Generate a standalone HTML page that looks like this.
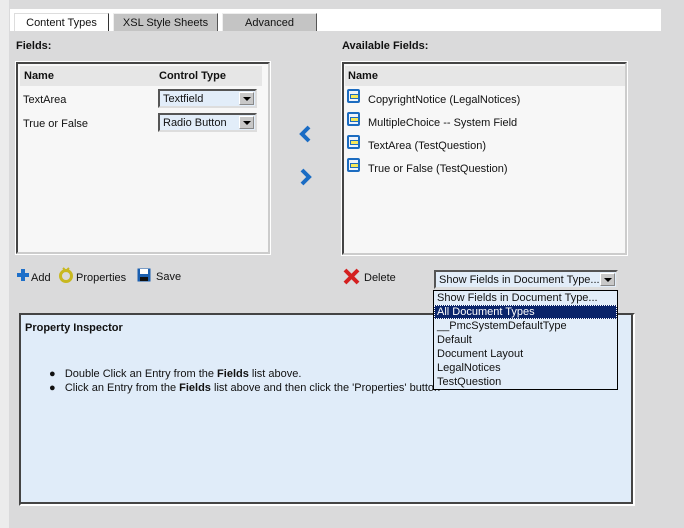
<!DOCTYPE html>
<html><head><meta charset="utf-8"><style>
*{margin:0;padding:0;box-sizing:border-box}
body{width:684px;height:528px;background:#dadadb;font-family:"Liberation Sans",Arial,sans-serif;font-size:11px;color:#111;position:relative;overflow:hidden}
.a{position:absolute}
.strip{left:0;top:0;width:9px;height:528px;background:#ececec}
.band{left:10px;top:9px;width:651px;height:22px;background:#fff}
.tab{top:13px;height:18px;border:1px solid #555;border-bottom:none;border-left-color:#eee;border-top-color:#eee;text-align:center;line-height:18px;font-size:11px;background:#c4c4c4}
.tab.on{background:#fff;border-color:#333;border-left-color:#ddd;border-top-color:#ddd}
.lbl{font-weight:bold;font-size:11px}
.box{background:#f7f7f7;border:2px solid #444;border-right-color:#ccc;border-bottom-color:#ccc;outline:1px solid #fff}
.hdr{background:#e6e6e6;height:20px;font-weight:bold;line-height:21px}
.sel{height:19px;background:#e2edf9;border:2px solid #555;border-right-color:#ddd;border-bottom-color:#ddd;line-height:16px;padding-left:3px}
.sel .btn{position:absolute;right:1px;top:1px;width:15px;height:13px;background:#c8c8c8;border:1px solid #888;border-top-color:#fff;border-left-color:#fff}
.sel .btn:after{content:"";position:absolute;left:3px;top:4px;border-left:4px solid transparent;border-right:4px solid transparent;border-top:4px solid #000}
.ic{width:13px;height:14px;border:2px solid #1c6cc0;border-radius:2px;background:#eef3fb}
.ic:after{content:"";position:absolute;left:1px;top:3px;width:7px;height:3px;background:#f5e85a;border:1px solid #1c6cc0}
.dd{left:433px;top:290px;width:185px;height:100px;background:#e2edf9;border:1px solid #000;line-height:14px;font-size:11px}
.dd div{padding-left:3px;height:14px}
.pi{left:19px;top:313px;width:616px;height:193px;background:#e0ecf9;border:2px solid #444;border-right-color:#fff;border-bottom-color:#fff;box-shadow:inset -2px -2px 0 #444}
</style></head><body>
<div class="a strip"></div>
<div class="a band"></div>
<div class="a tab on" style="left:14px;width:95px">Content Types</div>
<div class="a tab" style="left:113px;width:105px">XSL Style Sheets</div>
<div class="a tab" style="left:222px;width:95px">Advanced</div>

<div class="a lbl" style="left:16px;top:40px">Fields:</div>
<div class="a lbl" style="left:342px;top:40px">Available Fields:</div>

<div class="a box" style="left:16px;top:62px;width:254px;height:192px">
 <div class="hdr" style="width:242px;margin:2px 0 0 2px;position:relative"><span class="a" style="left:4px">Name</span><span class="a" style="left:139px">Control Type</span></div>
</div>
<div class="a" style="left:23px;top:94px">TextArea</div>
<div class="a" style="left:23px;top:118px">True or False</div>
<div class="a sel" style="left:158px;top:89px;width:99px">Textfield<span class="btn"></span></div>
<div class="a sel" style="left:158px;top:113px;width:99px">Radio Button<span class="btn"></span></div>

<svg class="a" style="left:298px;top:125px" width="16" height="20"><path d="M11 2 L4 9 L11 16" stroke="#1a6cc4" stroke-width="4" fill="none"/></svg>
<svg class="a" style="left:299px;top:168px" width="16" height="20"><path d="M3 2 L10 9 L3 16" stroke="#1a6cc4" stroke-width="4" fill="none"/></svg>

<div class="a box" style="left:342px;top:62px;width:285px;height:193px">
 <div class="hdr" style="margin:2px 0 0 1px;padding-left:3px">Name</div>
</div>
<div class="a ic" style="left:347px;top:89px"></div><div class="a" style="left:368px;top:94px">CopyrightNotice (LegalNotices)</div>
<div class="a ic" style="left:347px;top:112px"></div><div class="a" style="left:368px;top:117px">MultipleChoice -- System Field</div>
<div class="a ic" style="left:347px;top:135px"></div><div class="a" style="left:368px;top:140px">TextArea (TestQuestion)</div>
<div class="a ic" style="left:347px;top:158px"></div><div class="a" style="left:368px;top:163px">True or False (TestQuestion)</div>

<svg class="a" style="left:16px;top:268px" width="15" height="15"><path d="M7 1V13M1 7H13" stroke="#1d6fc9" stroke-width="4"/></svg>
<div class="a" style="left:31px;top:272px">Add</div>
<svg class="a" style="left:58px;top:266px" width="16" height="18"><circle cx="8" cy="10" r="5.5" stroke="#c8b820" stroke-width="3" fill="none"/><path d="M5 2L8 5L11 2" stroke="#c8b820" stroke-width="2" fill="none"/></svg>
<div class="a" style="left:76px;top:272px">Properties</div>
<svg class="a" style="left:137px;top:268px" width="14" height="14"><rect x="0.5" y="0.5" width="13" height="13" fill="#1b5faf"/><rect x="3" y="1" width="8" height="5" fill="#fff"/><rect x="3" y="9" width="8" height="4" fill="#111"/></svg>
<div class="a" style="left:156px;top:271px">Save</div>

<svg class="a" style="left:343px;top:268px" width="17" height="17"><path d="M2 2L15 15M15 2L2 15" stroke="#d42020" stroke-width="4"/></svg>
<div class="a" style="left:364px;top:272px">Delete</div>
<div class="a sel" style="left:434px;top:270px;width:184px;font-size:11px">Show Fields in Document Type...<span class="btn"></span></div>

<div class="a pi">
 <div class="a lbl" style="left:4px;top:7px">Property Inspector</div>
 <div class="a" style="left:28px;top:52px;line-height:14px">
  <div>●&nbsp;&nbsp;&nbsp;Double Click an Entry from the <b>Fields</b> list above.</div>
  <div>●&nbsp;&nbsp;&nbsp;Click an Entry from the <b>Fields</b> list above and then click the 'Properties' button</div>
 </div>
</div>

<div class="a dd">
 <div>Show Fields in Document Type...</div>
 <div style="background:#0a246a;color:#fff;outline:1px dotted #fff;outline-offset:-1px">All Document Types</div>
 <div>__PmcSystemDefaultType</div>
 <div>Default</div>
 <div>Document Layout</div>
 <div>LegalNotices</div>
 <div>TestQuestion</div>
</div>
</body></html>
